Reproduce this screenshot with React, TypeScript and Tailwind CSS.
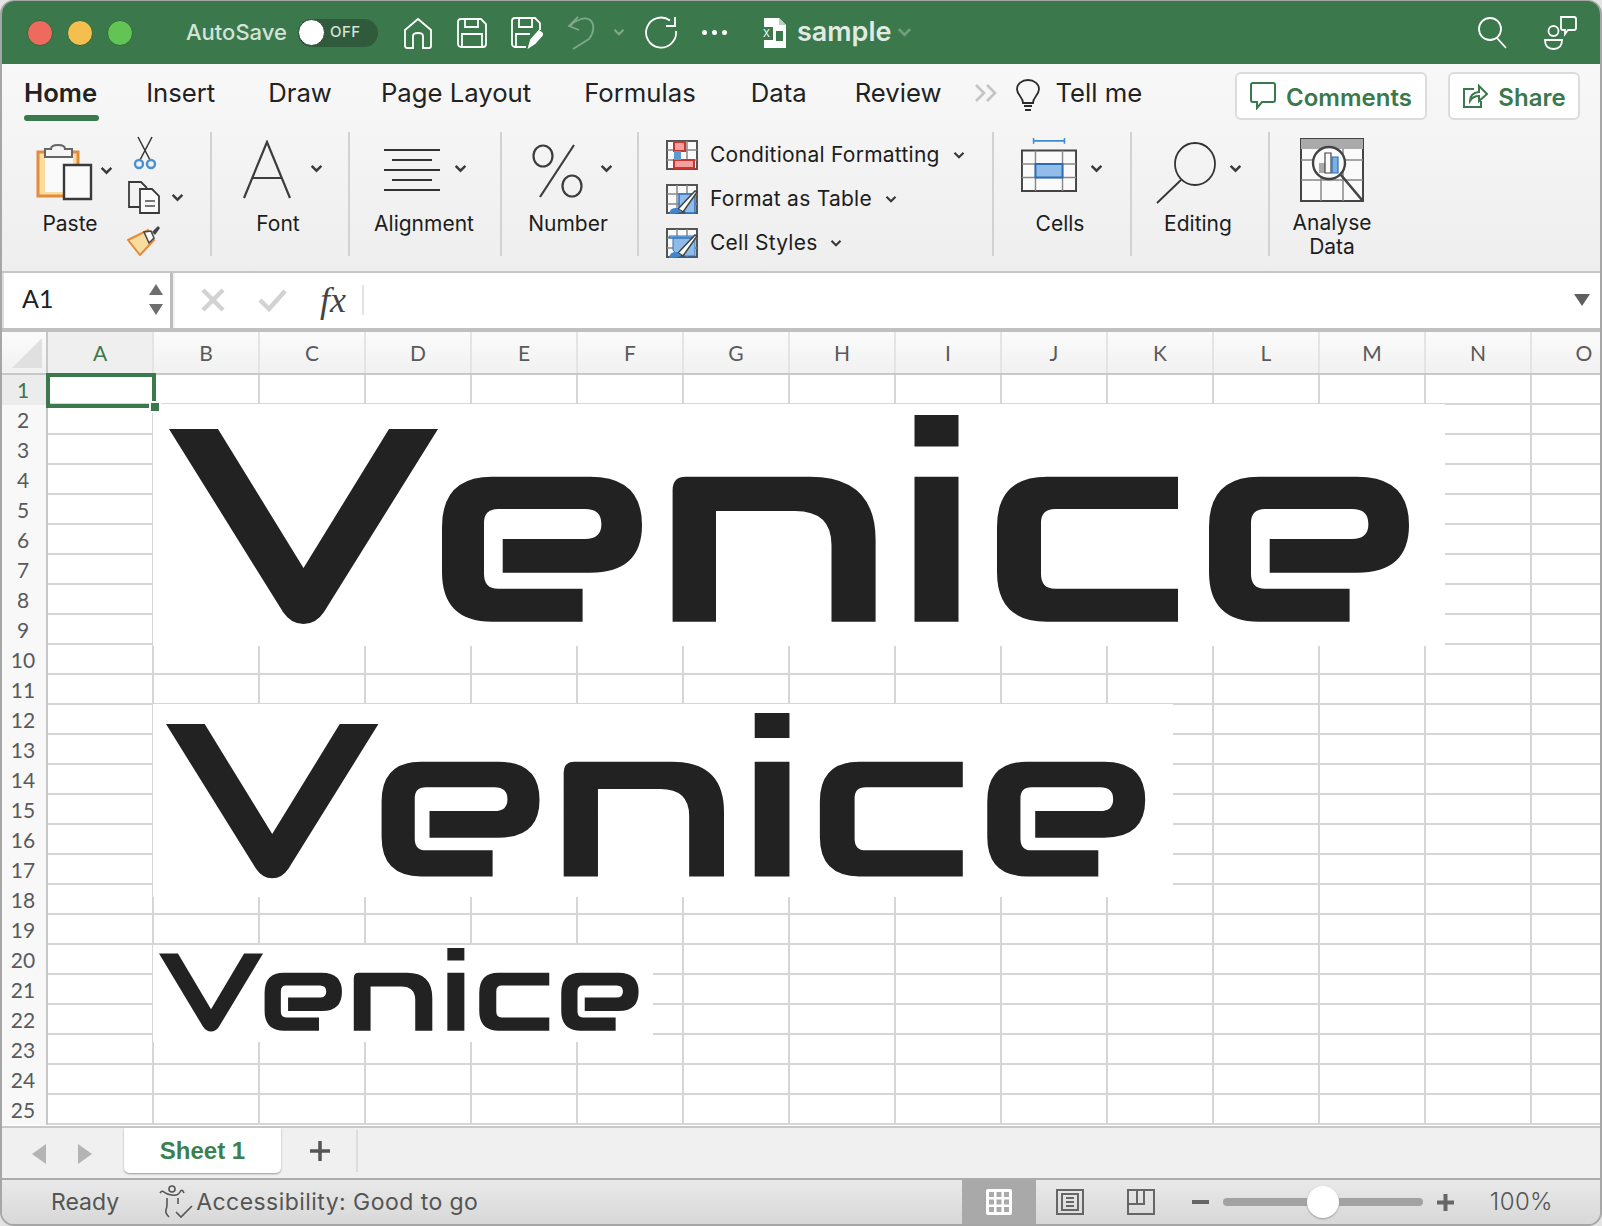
import type { ReactNode } from "react"

const GREEN = "#3b784b"
const COLUMNS = ["A", "B", "C", "D", "E", "F", "G", "H", "I", "J", "K", "L", "M", "N", "O"]
const ROWS = Array.from({ length: 25 }, (_, i) => i + 1)
const TABS = [
  { label: "Home", ml: "ml-[22px] pr-[2px]", active: true },
  { label: "Insert", ml: "ml-[47px]" },
  { label: "Draw", ml: "ml-[53px]" },
  { label: "Page Layout", ml: "ml-[49px]" },
  { label: "Formulas", ml: "ml-[53px]" },
  { label: "Data", ml: "ml-[55px]" },
  { label: "Review", ml: "ml-[48px]" },
]

function Chevron({ className = "", w = 13, stroke = "#3a3a3a" }: { className?: string; w?: number; stroke?: string }) {
  return (
    <svg width={w} height={w * 0.7} viewBox="0 0 12 8" className={className} fill="none" stroke={stroke} strokeWidth="2.2">
      <path d="M1.5 1.5 6 6l4.5-4.5" />
    </svg>
  )
}

// the pasted wordmark, drawn in the coordinates of the largest copy
function VeniceLogo({ width, height }: { width: number; height: number }) {
  return (
    <svg width={width} height={height} viewBox="169 415 1241 210" preserveAspectRatio="none" fill="#222222" className="block">
      <path d="M169 429h49l85.500 139L389 429h49L324 612q-8 12-20.500 12T283 612Z" />
      <path d="M582.600 621.700H492Q442 621.700 442 572V527Q442 476.700 492 476.700H590Q642 476.700 642 525 642 572.700 590 572.700H502.700V539H585Q601.400 539 601.400 524 601.400 509 585 509H498Q484 509 484 523V574Q484 588.700 498 588.700H582.600Z" />
      <path d="M672.600 621.700V490Q672.600 476.700 686 476.700H810Q875.600 476.700 875.600 540V621.700H831.500V545Q831.500 511 795 511H716V621.700Z" />
      <path d="M914.500 415h44v31.500h-44ZM914.500 476.700h44v145h-44Z" />
      <path d="M1178 476.700H1047Q997 476.700 997 527V572Q997 621.700 1047 621.700H1178V588.700H1055Q1041 588.700 1041 574V523Q1041 509 1055 509H1178Z" />
      <path d="M1349.600 621.700H1259Q1209 621.700 1209 572V527Q1209 476.700 1259 476.700H1357Q1409 476.700 1409 525 1409 572.700 1357 572.700H1269.700V539H1352Q1368.400 539 1368.400 524 1368.400 509 1352 509H1265Q1251 509 1251 523V574Q1251 588.700 1265 588.700H1349.600Z" />
    </svg>
  )
}

function TitleBar() {
  return (
    <div className="flex h-[63px] shrink-0 items-center text-white" style={{ backgroundColor: GREEN }}>
      <div className="ml-[25px] flex gap-[14px]">
        <span className="h-[26px] w-[26px] rounded-full border border-[#2f6b3a] bg-[#ee6a5f]" />
        <span className="h-[26px] w-[26px] rounded-full border border-[#2f6b3a] bg-[#f5bf4f]" />
        <span className="h-[26px] w-[26px] rounded-full border border-[#2f6b3a] bg-[#61c454]" />
      </div>
      <span className="ml-[53px] text-[22px] font-medium text-[#d4e3d8]">AutoSave</span>
      <div className="ml-[11px] flex h-[28px] w-[80px] items-center rounded-full bg-[#2f5a3c]">
        <span className="h-[27px] w-[27px] rounded-full border border-[#24482f] bg-white" />
        <span className="ml-[5px] text-[15px] font-medium tracking-[0.5px] text-[#d4e3d8]">OFF</span>
      </div>
      <svg width="30" height="32" viewBox="0 0 30 32" className="ml-[25px]" fill="none" stroke="white" strokeWidth="1.8">
        <path d="M2 13 15 2l13 11v16a2 2 0 0 1-2 2h-6V19q0-3-5-3t-5 3v12H4a2 2 0 0 1-2-2Z" />
      </svg>
      <svg width="30" height="30" viewBox="0 0 30 30" className="ml-[24px]" fill="none" stroke="white" strokeWidth="1.8">
        <path d="M4 1h20l5 5v20a3 3 0 0 1-3 3H4a3 3 0 0 1-3-3V4a3 3 0 0 1 3-3ZM8 1v8h13V1M5 29V16h20v13" />
      </svg>
      <svg width="32" height="32" viewBox="0 0 32 32" className="ml-[24px]" fill="none" stroke="white" strokeWidth="1.8">
        <path d="M15 30H4a3 3 0 0 1-3-3V4a3 3 0 0 1 3-3h20l5 5v7M8 1v9h13V1M5 30V17h14" />
        <path d="m18 30 2-7 8-9 4 3-8 9Z" fill="white" stroke="white" />
      </svg>
      <svg width="30" height="34" viewBox="0 0 30 34" className="ml-[24px]" fill="none" stroke="#7fa88b" strokeWidth="1.8">
        <path d="M11 1 2 10l10 4" />
        <path d="M3 10C9 4 18 0 23 4c5 4 4 13-1 19L6 33" />
      </svg>
      <Chevron className="ml-[16px]" w={12} stroke="#7fa88b" />
      <svg width="33" height="33" viewBox="0 0 33 33" className="ml-[20px]" fill="none" stroke="white" strokeWidth="1.8">
        <path d="M25 4.500A15 15 0 1 0 31 15" />
        <path d="M30 1v9H21" />
      </svg>
      <span className="ml-[24px] flex gap-[5px]">
        <span className="h-[5px] w-[5px] rounded-full bg-white" />
        <span className="h-[5px] w-[5px] rounded-full bg-white" />
        <span className="h-[5px] w-[5px] rounded-full bg-white" />
      </span>
      <svg width="26" height="30" viewBox="0 0 26 30" className="ml-[33px]">
        <path d="M4 0h15l7 7v23H4Z" fill="white" />
        <path d="M19 0v7h7Z" fill="#b9cfc0" />
        <path d="M16 13h7v10h-7Z" fill="#3b784b" />
        <path d="M0 9h13v13H0Z" fill="#3b784b" />
        <text x="3" y="19" fontSize="10" fill="white" fontFamily="Inter">X</text>
      </svg>
      <span className="ml-[11px] text-[27px] font-semibold text-[#e0ebe3]">sample</span>
      <Chevron className="ml-[6px]" w={15} stroke="#6f9f7d" />
      <svg width="30" height="32" viewBox="0 0 30 32" className="ml-auto" fill="none" stroke="white" strokeWidth="1.8">
        <circle cx="12" cy="12" r="11" />
        <path d="m19 21 9 10" />
      </svg>
      <svg width="34" height="34" viewBox="0 0 34 34" className="ml-[35px] mr-[23px]" fill="none" stroke="white" strokeWidth="1.800">
        <circle cx="10.500" cy="15" r="5" />
        <path d="M2 24h17q0 9-8.500 9T2 24Z" />
        <path d="M18 1h13a2 2 0 0 1 2 2v9a2 2 0 0 1-2 2h-6l-3 4v-4h-2a2 2 0 0 1-2-2Z" />
      </svg>
    </div>
  )
}

function TabsRow() {
  return (
    <div className="flex h-[68px] items-start">
      {TABS.map((t) => (
        <div key={t.label} className={`${t.ml} relative flex h-[57px] items-center pt-[1px]`}>
          <span className={`text-[25.7px] text-[#222] ${t.active ? "font-semibold" : "font-normal"}`}>{t.label}</span>
          {t.active && <span className="absolute bottom-0 left-0 h-[6px] w-full rounded-[3px] bg-[#3b784b]" />}
        </div>
      ))}
      <svg width="24" height="20" viewBox="0 0 24 20" className="ml-[33px] mt-[19px]" fill="none" stroke="#c4c4c4" strokeWidth="2.600">
        <path d="m2 2 8 8-8 8M13 2l8 8-8 8" />
      </svg>
      <svg width="26" height="32" viewBox="0 0 26 32" className="ml-[17px] mt-[15px]" fill="none" stroke="#2b2b2b" strokeWidth="1.800">
        <path d="M8 24c0-6-6-8-6-14a11 9 0 0 1 22 0c0 6-6 8-6 14ZM9 27h8M10 31h6" />
      </svg>
      <span className="ml-[14px] flex h-[57px] items-center pt-[1px] text-[25.7px] text-[#222]">Tell me</span>
      <div className="ml-auto mt-[8px] flex h-[48px] w-[192px] items-center justify-center gap-[10px] rounded-[6px] border-2 border-[#dcdcdc] bg-white">
        <svg width="26" height="28" viewBox="0 0 26 28" fill="none" stroke={GREEN} strokeWidth="2">
          <path d="M3 1h20a2 2 0 0 1 2 2v15a2 2 0 0 1-2 2H12l-5 6v-6H3a2 2 0 0 1-2-2V3a2 2 0 0 1 2-2Z" />
        </svg>
        <span className="pt-[3px] text-[24px] font-semibold text-[#3b784b]">Comments</span>
      </div>
      <div className="ml-[21px] mr-[20px] mt-[8px] flex h-[48px] w-[132px] items-center justify-center gap-[10px] rounded-[6px] border-2 border-[#dcdcdc] bg-white">
        <svg width="26" height="26" viewBox="0 0 26 26" fill="none" stroke={GREEN} strokeWidth="2">
          <path d="M12 6H2v18h17v-6" />
          <path d="M8 18q0-8 9-9V3l8 8-8 7v-5q-6 0-9 5Z" />
        </svg>
        <span className="pt-[3px] text-[24px] font-semibold text-[#3b784b]">Share</span>
      </div>
    </div>
  )
}

function Group({ w, children }: { w: string; children: ReactNode }) {
  return <div className={`${w} relative flex h-[124px] shrink-0 flex-col border-r-2 border-[#d2d2d2]`}>{children}</div>
}

function RibbonLabel({ children, className = "" }: { children: ReactNode; className?: string }) {
  return <span className={`text-center text-[21px] leading-[24px] text-[#1d1d1d] ${className}`}>{children}</span>
}

function StyleRow({ icon, label, mt }: { icon: ReactNode; label: string; mt: string }) {
  return (
    <div className={`flex h-[30px] items-center ${mt}`}>
      {icon}
      <span className="ml-[12px] text-[21px] tracking-[0.25px] text-[#1d1d1d]">{label}</span>
      <Chevron className="ml-[13px]" w={12} />
    </div>
  )
}

function GridIcon({ variant }: { variant: "cond" | "table" | "styles" }) {
  return (
    <svg width="32" height="30" viewBox="0 0 32 30" fill="none">
      <path d="M1 1h30v28H1Z" fill="#fafafa" stroke="#555" strokeWidth="2" />
      <path d="M11 1v28M21 1v28M1 10h30M1 20h30" stroke="#888" strokeWidth="1.500" />
      {variant === "cond" && (
        <>
          <path d="M8 2h11v9H8ZM8 20h20v8H8Z" fill="#f2a0a0" stroke="#c8362e" strokeWidth="2" />
          <path d="M8 11h7v9H8Z" fill="#5b9bd5" />
        </>
      )}
      {variant === "table" && <path d="M13 10h16v19H20l-7-6Z" fill="#8fbbe8" stroke="#2f72bd" strokeWidth="1.500" />}
      {variant === "styles" && <path d="M3 8h26v2H3ZM7 10h22v18H12l-5-6Z" fill="#8fbbe8" stroke="#2f72bd" strokeWidth="1" />}
      {variant !== "cond" && (
        <>
          <path d="m12 25 17-18 2 1-14 20Z" fill="white" stroke="#444" strokeWidth="1.500" />
          <path d="M3 30q1-7 8-6l4 3q-2 3-12 3Z" fill="#3f86cf" />
        </>
      )}
    </svg>
  )
}

function Ribbon() {
  return (
    <div className="flex h-[139px] items-start">
      <Group w="w-[210px]">
        <div className="flex">
          <div className="ml-[34px] flex w-[64px] flex-col">
            <svg width="60" height="66" viewBox="0 0 60 66" className="mt-[12px]">
              <path d="M2 8h40v44H2Z" fill="#f9dd9f" stroke="#e48a3c" strokeWidth="3" />
              <path d="M9 8h28v40H9Z" fill="#fafafa" />
              <path d="M9 2h6q0-4 7-4t7 4h7v8H9Z" transform="translate(0 3)" fill="#f5f5f5" stroke="#666" strokeWidth="2" />
              <path d="M28 21h27v34H28Z" fill="#fafafa" stroke="#3a3a3a" strokeWidth="2.400" />
            </svg>
            <RibbonLabel className="ml-[-2px] mt-[2px] w-[72px]">Paste</RibbonLabel>
          </div>
          <Chevron className="mt-[34px]" />
          <div className="ml-[14px] mt-[4px] flex flex-col">
            <svg width="24" height="34" viewBox="0 0 24 34" fill="none" className="ml-[6px]">
              <path d="M5 1 17 24M19 1 7 24" stroke="#333" strokeWidth="1.500" />
              <circle cx="6" cy="28" r="4" stroke="#4a90d0" strokeWidth="2.400" />
              <circle cx="18" cy="28" r="4" stroke="#4a90d0" strokeWidth="2.400" />
            </svg>
            <div className="mt-[10px] flex">
              <svg width="34" height="34" viewBox="0 0 34 34" fill="none" stroke="#3a3a3a" strokeWidth="1.800">
                <path d="M14 27H2V2h12l6 6" />
                <path d="M13 9h12l7 7v17H13Z" fill="#fafafa" />
                <path d="M18 21h10M18 26h10" stroke="#777" />
              </svg>
              <Chevron className="ml-[10px] mt-[13px]" />
            </div>
            <svg width="34" height="32" viewBox="0 0 34 32" className="mt-[10px]">
              <path d="M1 16 21 6l6 10-14 15Z" fill="#f9dd9f" stroke="#e48a3c" strokeWidth="2" />
              <path d="m17 8 7-1 3 7-5 5Z" fill="#fafafa" stroke="#444" strokeWidth="1.500" />
              <path d="m25 8 6-6 2 2-5 7Z" fill="#444" />
            </svg>
          </div>
        </div>
      </Group>
      <Group w="w-[138px]">
        <div className="flex h-[74px] items-start">
          <svg width="48" height="60" viewBox="0 0 48 58" className="ml-[31px] mt-[8px]" fill="none" stroke="#3d3d3d" strokeWidth="2.200">
            <path d="m1 57 23-56 23 56M9 37h30" />
          </svg>
          <Chevron className="ml-[19px] mt-[32px]" />
        </div>
        <RibbonLabel className="ml-[16px] mt-[6px] w-[100px]">Font</RibbonLabel>
      </Group>
      <Group w="w-[152px]">
        <div className="flex h-[74px] items-start">
          <svg width="56" height="42" viewBox="0 0 56 42" className="ml-[34px] mt-[17px]" stroke="#333" strokeWidth="2">
            <path d="M0 1h56M8 11h40M0 21h56M8 31h40M0 41h56" />
          </svg>
          <Chevron className="ml-[14px] mt-[32px]" />
        </div>
        <RibbonLabel className="ml-[14px] mt-[6px] w-[120px]">Alignment</RibbonLabel>
      </Group>
      <Group w="w-[137px]">
        <div className="flex h-[74px] items-start">
          <svg width="52" height="54" viewBox="0 0 52 54" className="ml-[30px] mt-[12px]" fill="none" stroke="#3d3d3d" strokeWidth="2.200">
            <ellipse cx="11" cy="12" rx="9.500" ry="10.500" />
            <path d="M42 1 8 53" />
            <ellipse cx="40" cy="42" rx="9.500" ry="10.500" />
          </svg>
          <Chevron className="ml-[16px] mt-[32px]" />
        </div>
        <RibbonLabel className="ml-[16px] mt-[6px] w-[100px]">Number</RibbonLabel>
      </Group>
      <Group w="w-[355px]">
        <div className="ml-[27px] mt-[8px] flex flex-col">
          <StyleRow icon={<GridIcon variant="cond" />} label="Conditional Formatting" mt="" />
          <StyleRow icon={<GridIcon variant="table" />} label="Format as Table" mt="mt-[14px]" />
          <StyleRow icon={<GridIcon variant="styles" />} label="Cell Styles" mt="mt-[14px]" />
        </div>
      </Group>
      <Group w="w-[138px]">
        <div className="flex h-[74px] items-start">
          <svg width="56" height="56" viewBox="0 0 58 56" className="ml-[27px] mt-[5px]" fill="none">
            <path d="M13 3h32M13 0v6M45 0v6" stroke="#3f8bd0" strokeWidth="1.600" />
            <path d="M1 13h56v42H1Z" fill="#fafafa" stroke="#444" strokeWidth="2" />
            <path d="M15 13v42M43 13v42M1 27h56M1 41h56" stroke="#888" strokeWidth="1.500" />
            <path d="M15 27h28v14H15Z" fill="#92bde8" stroke="#2a6db5" strokeWidth="2" />
          </svg>
          <Chevron className="ml-[13px] mt-[32px]" />
        </div>
        <RibbonLabel className="ml-[16px] mt-[6px] w-[100px]">Cells</RibbonLabel>
      </Group>
      <Group w="w-[138px]">
        <div className="flex h-[74px] items-start">
          <svg width="60" height="62" viewBox="0 0 60 62" className="ml-[24px] mt-[10px]" fill="none" stroke="#333" strokeWidth="1.800">
            <ellipse cx="39" cy="22" rx="20" ry="21" />
            <path d="M25 38 1 61" />
          </svg>
          <Chevron className="ml-[13px] mt-[32px]" />
        </div>
        <RibbonLabel className="ml-[16px] mt-[6px] w-[100px]">Editing</RibbonLabel>
      </Group>
      <div className="flex w-[124px] shrink-0 flex-col items-center">
        <svg width="64" height="64" viewBox="0 0 64 64" className="mt-[6px]" fill="none">
          <path d="M1 1h62v62H1Z" fill="#fafafa" stroke="#444" strokeWidth="2" />
          <path d="M1 1h62v10H1Z" fill="#aaa" />
          <path d="M1 22h62M1 42h62M21 11v52M43 11v52" stroke="#888" strokeWidth="1.500" />
          <circle cx="29" cy="25" r="16" fill="#fafafa" stroke="#444" strokeWidth="2.400" />
          <path d="M19 25h6v10h-6Z" fill="#aaa" />
          <path d="M25 15h6v20h-6Z" fill="#fafafa" stroke="#444" strokeWidth="1.200" />
          <path d="M32 19h6v16h-6Z" fill="#7db0e4" stroke="#2a6db5" strokeWidth="1.200" />
          <path d="m41 37 21 25" stroke="#444" strokeWidth="2.600" />
        </svg>
        <RibbonLabel className="mt-[9px] w-[100px]">
          Analyse
          <br />
          Data
        </RibbonLabel>
      </div>
    </div>
  )
}

function FormulaBar() {
  return (
    <div className="flex h-[61px] shrink-0 flex-col border-t-2 border-[#c6c6c6] bg-[#f0f0f0]">
      <div className="flex h-[55px] bg-white">
        <div className="flex w-[171px] items-center justify-between border-r-[3px] border-[#bcbcbc] bg-white pb-[3px] pl-[20px] pr-[7px] shadow-[inset_2px_0_0_#ddd]">
          <span className="text-[25px] text-[#222] [font-family:Lato]">A1</span>
          <div className="flex flex-col gap-[9px]">
            <span className="h-0 w-0 border-x-[7px] border-b-[11px] border-x-transparent border-b-[#6e6e6e]" />
            <span className="h-0 w-0 border-x-[7px] border-t-[11px] border-x-transparent border-t-[#6e6e6e]" />
          </div>
        </div>
        <div className="flex flex-1 items-center border-l-2 border-[#f2f2f2] pb-[1px]">
          <svg width="24" height="24" viewBox="0 0 24 24" className="ml-[26px]" stroke="#d2d2d2" strokeWidth="4.500" fill="none">
            <path d="m2 2 20 20M22 2 2 22" />
          </svg>
          <svg width="30" height="24" viewBox="0 0 30 24" className="ml-[33px]" stroke="#d2d2d2" strokeWidth="4.500" fill="none">
            <path d="m2 12 9 9L27 3" />
          </svg>
          <span className="ml-[32px] text-[36px] italic leading-none text-[#444] [font-family:'Liberation_Serif']">fx</span>
          <span className="ml-[16px] h-[30px] w-[2px] bg-[#e2e2e2]" />
          <span className="ml-auto mr-[10px] h-0 w-0 border-x-[8px] border-t-[12px] border-x-transparent border-t-[#5f5f5f]" />
        </div>
      </div>
      <div className="h-[4px] border-y-2 border-[#c0c0c0] bg-white" />
    </div>
  )
}

function Sheet() {
  return (
    <div className="relative flex-1 overflow-hidden bg-white [font-family:Lato]">
      <div className="flex h-[43px] border-b-2 border-[#c8c8c8] bg-gradient-to-b from-[#fbfbfb] to-[#f1f1f1]">
        <div className="flex w-[46px] shrink-0 items-end justify-end border-r-2 border-[#c8c8c8] pb-[5px] pr-[4px]">
          <span className="h-0 w-0 border-b-[30px] border-l-[30px] border-b-[#e0e0e0] border-l-transparent" />
        </div>
        {COLUMNS.map((c) => (
          <div
            key={c}
            className={`flex w-[106px] shrink-0 items-center justify-center border-r-2 border-[#e4e4e4] text-[21px] ${
              c === "A" ? "bg-[#efefef] text-[#3b784b]" : "text-[#5a5a5a]"
            }`}
          >
            {c}
          </div>
        ))}
      </div>
      {ROWS.map((r) => (
        <div key={r} className="flex h-[30px]">
          <div
            className={`flex w-[46px] shrink-0 items-center justify-center border-r-2 border-[#c8c8c8] pr-[2px] text-[21px] ${
              r === 1 ? "bg-[#ececec] text-[#3b784b]" : "bg-[#f8f8f8] text-[#5a5a5a]"
            }`}
          >
            {r}
          </div>
          {COLUMNS.map((c) => (
            <div key={c} className="w-[106px] shrink-0 border-b-2 border-r-2 border-[#d6d6d6]" />
          ))}
        </div>
      ))}
      {/* pasted pictures sit over the cells */}
      <div className="absolute left-[151px] top-[72px] h-[242px] w-[1292px] bg-white pl-[16px] pt-[11px]">
        <VeniceLogo width={1241} height={210} />
      </div>
      <div className="absolute left-[151px] top-[372px] h-[193px] w-[1020px] bg-white pl-[13px] pt-[9px]">
        <VeniceLogo width={980} height={166} />
      </div>
      <div className="absolute left-[151px] top-[613px] h-[97px] w-[500px] bg-white pl-[6px] pt-[3px]">
        <VeniceLogo width={480} height={84} />
      </div>
      {/* selected cell */}
      <div className="absolute left-[44px] top-[41px] h-[35px] w-[110px] border-[4px] border-[#3b784b]">
        <span className="absolute -bottom-[9px] -right-[9px] h-[12px] w-[12px] border-2 border-white bg-[#3b784b]" />
      </div>
    </div>
  )
}

function SheetTabs() {
  return (
    <div className="flex h-[52px] shrink-0 items-start border-t-2 border-[#c8c8c8] bg-[#f0f0f0]">
      <span className="ml-[30px] mt-[16px] h-0 w-0 border-y-[10px] border-r-[14px] border-y-transparent border-r-[#b4b4b4]" />
      <span className="ml-[32px] mt-[16px] h-0 w-0 border-y-[10px] border-l-[14px] border-y-transparent border-l-[#b4b4b4]" />
      <div className="ml-[32px] flex h-[45px] w-[157px] items-center justify-center rounded-b-[5px] bg-white text-[24px] font-semibold text-[#3b8050] shadow-[0_1px_2px_#999] [font-family:'Liberation_Sans']">
        Sheet 1
      </div>
      <svg width="20" height="20" viewBox="0 0 20 20" className="ml-[29px] mt-[13px]" stroke="#555" strokeWidth="3.500">
        <path d="M10 0v20M0 10h20" />
      </svg>
      <span className="ml-[26px] mt-[2px] h-[42px] w-[2px] bg-[#dcdcdc]" />
    </div>
  )
}

function StatusBar() {
  return (
    <div className="flex h-[46px] shrink-0 items-center border-t-2 border-[#ababab] bg-gradient-to-b from-[#e9e9e9] to-[#d8d8d8] text-[23px] text-[#555]">
      <span className="ml-[49px]">Ready</span>
      <svg width="34" height="34" viewBox="0 0 34 34" className="ml-[40px]" fill="none" stroke="#555" strokeWidth="1.600">
        <circle cx="13" cy="4" r="3" />
        <path d="M1 8q2-3 4-1t8 3 8-3 4 1M8 13v6q0 3-1 6t3 7M19 13v6" />
        <path d="m17 27 5 5 11-11" />
      </svg>
      <span className="ml-[3px] tracking-[0.45px]">Accessibility: Good to go</span>
      <div className="ml-auto flex h-full w-[74px] items-center justify-center bg-[#a9a9a9]">
        <svg width="26" height="26" viewBox="0 0 26 26">
          <path d="M0 2a2 2 0 0 1 2-2h22a2 2 0 0 1 2 2v22a2 2 0 0 1-2 2H2a2 2 0 0 1-2-2Z" fill="white" />
          <path d="M3 3h5v5H3ZM10.500 3h5v5h-5ZM18 3h5v5h-5ZM3 10.500h5v5H3ZM10.500 10.500h5v5h-5ZM18 10.500h5v5h-5ZM3 18h5v5H3ZM10.500 18h5v5h-5ZM18 18h5v5h-5Z" fill="#a9a9a9" />
        </svg>
      </div>
      <svg width="28" height="26" viewBox="0 0 28 26" className="ml-[20px]" fill="none" stroke="#666" strokeWidth="2">
        <path d="M1 1h26v24H1ZM6 5h16v16H6Z" />
        <path d="M10 9h8M10 13h8M10 17h8" />
      </svg>
      <svg width="28" height="26" viewBox="0 0 28 26" className="ml-[43px]" fill="none" stroke="#666" strokeWidth="2">
        <path d="M1 1h26v24H1ZM1 15h16V1M10 1v14" />
      </svg>
      <span className="ml-[37px] h-[4px] w-[17px] bg-[#666]" />
      <div className="relative ml-[14px] flex h-[8px] w-[200px] rounded-full bg-[#a2a2a2]">
        <span className="absolute left-[84px] top-[-12px] h-[32px] w-[32px] rounded-full bg-white shadow-[0_1px_2px_#999]" />
      </div>
      <svg width="17" height="17" viewBox="0 0 17 17" className="ml-[14px]" stroke="#666" strokeWidth="4">
        <path d="M8.500 0v17M0 8.500h17" />
      </svg>
      <span className="ml-[36px] mr-[47px] text-[24px] font-light tracking-[0.4px]">100%</span>
    </div>
  )
}

export default function App() {
  return (
    <div className="h-[1226px] w-[1602px] overflow-hidden bg-[#e4e4e4]">
      <div className="flex h-full flex-col overflow-hidden rounded-[14px] border-x-2 border-b-2 border-t border-[#a6a6a6] [font-family:Inter,sans-serif]">
        <TitleBar />
        <div className="shrink-0 bg-gradient-to-b from-[#f8f8f8] to-[#eeeeee]">
          <TabsRow />
          <Ribbon />
        </div>
        <FormulaBar />
        <Sheet />
        <SheetTabs />
        <StatusBar />
      </div>
    </div>
  )
}
